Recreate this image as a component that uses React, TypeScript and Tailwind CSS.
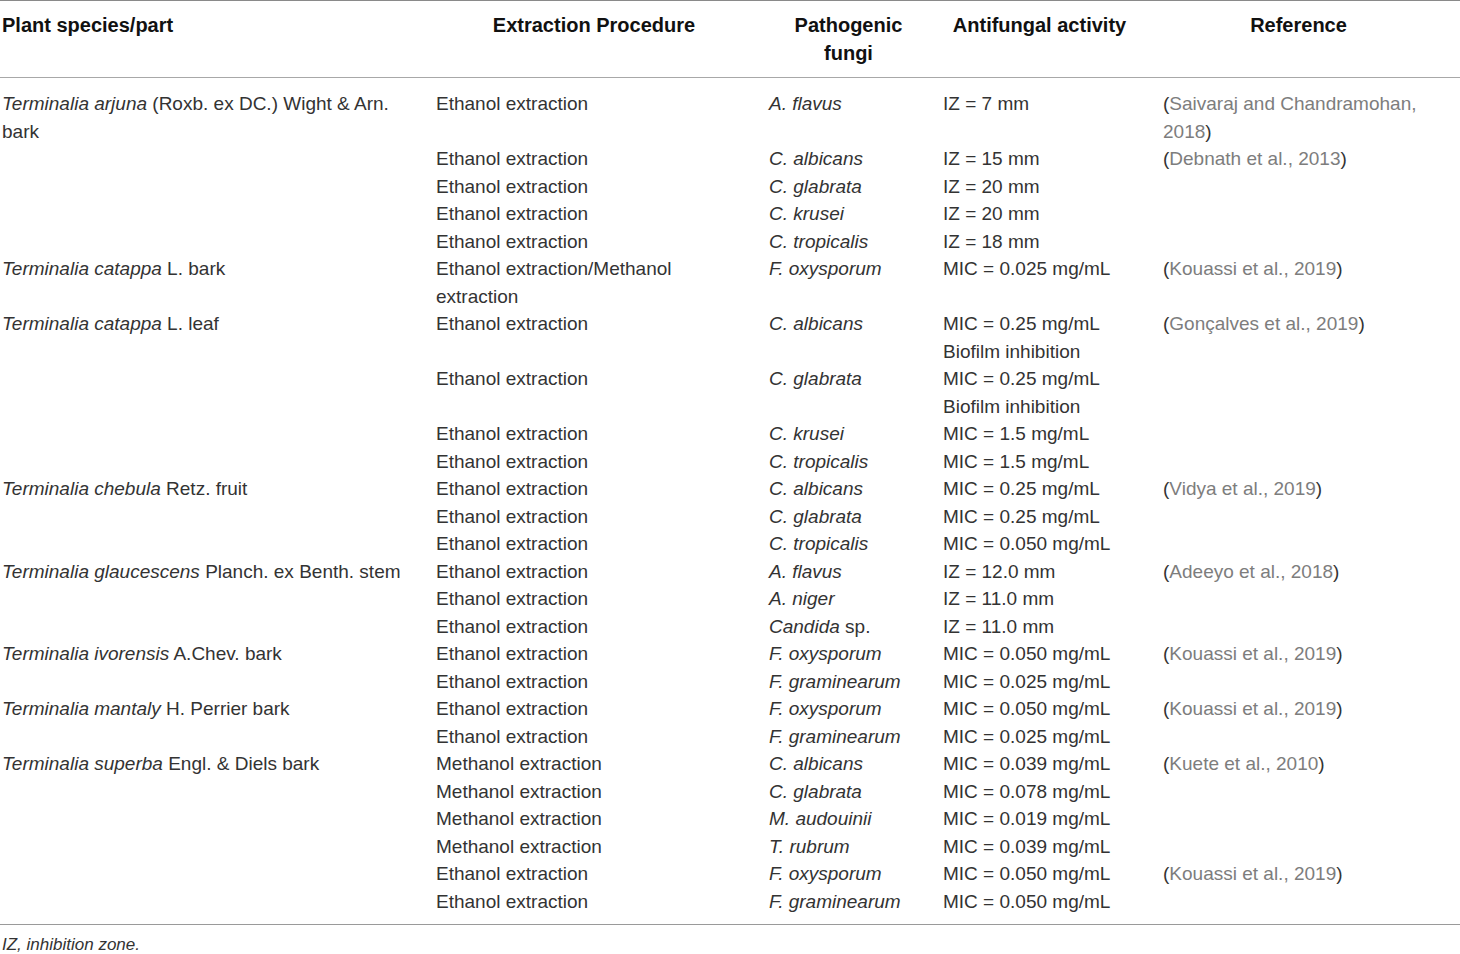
import React from "react";

const G = ({ children }: { children: React.ReactNode }) => (
  <span className="text-[#7d7d7d]">{children}</span>
);

const Ref = ({ children }: { children: React.ReactNode }) => (
  <span>
    (<G>{children}</G>)
  </span>
);

type Row = [React.ReactNode, React.ReactNode, React.ReactNode, React.ReactNode, React.ReactNode];

const E = "Ethanol extraction";
const M = "Methanol extraction";

const rows: Row[] = [
  [
    <>
      <i>Terminalia arjuna</i> (Roxb. ex DC.) Wight &amp; Arn.
      <br />
      bark
    </>,
    E,
    <i>A. flavus</i>,
    "IZ = 7 mm",
    <Ref>
      Saivaraj and Chandramohan,
      <br />
      2018
    </Ref>,
  ],
  ["", E, <i>C. albicans</i>, "IZ = 15 mm", <Ref>Debnath et al., 2013</Ref>],
  ["", E, <i>C. glabrata</i>, "IZ = 20 mm", ""],
  ["", E, <i>C. krusei</i>, "IZ = 20 mm", ""],
  ["", E, <i>C. tropicalis</i>, "IZ = 18 mm", ""],
  [
    <>
      <i>Terminalia catappa</i> L. bark
    </>,
    <>
      Ethanol extraction/Methanol
      <br />
      extraction
    </>,
    <i>F. oxysporum</i>,
    "MIC = 0.025 mg/mL",
    <Ref>Kouassi et al., 2019</Ref>,
  ],
  [
    <>
      <i>Terminalia catappa</i> L. leaf
    </>,
    E,
    <i>C. albicans</i>,
    <>
      MIC = 0.25 mg/mL
      <br />
      Biofilm inhibition
    </>,
    <Ref>Gonçalves et al., 2019</Ref>,
  ],
  [
    "",
    E,
    <i>C. glabrata</i>,
    <>
      MIC = 0.25 mg/mL
      <br />
      Biofilm inhibition
    </>,
    "",
  ],
  ["", E, <i>C. krusei</i>, "MIC = 1.5 mg/mL", ""],
  ["", E, <i>C. tropicalis</i>, "MIC = 1.5 mg/mL", ""],
  [
    <>
      <i>Terminalia chebula</i> Retz. fruit
    </>,
    E,
    <i>C. albicans</i>,
    "MIC = 0.25 mg/mL",
    <Ref>Vidya et al., 2019</Ref>,
  ],
  ["", E, <i>C. glabrata</i>, "MIC = 0.25 mg/mL", ""],
  ["", E, <i>C. tropicalis</i>, "MIC = 0.050 mg/mL", ""],
  [
    <>
      <i>Terminalia glaucescens</i> Planch. ex Benth. stem
    </>,
    E,
    <i>A. flavus</i>,
    "IZ = 12.0 mm",
    <Ref>Adeeyo et al., 2018</Ref>,
  ],
  ["", E, <i>A. niger</i>, "IZ = 11.0 mm", ""],
  [
    "",
    E,
    <>
      <i>Candida</i> sp.
    </>,
    "IZ = 11.0 mm",
    "",
  ],
  [
    <>
      <i>Terminalia ivorensis</i> A.Chev. bark
    </>,
    E,
    <i>F. oxysporum</i>,
    "MIC = 0.050 mg/mL",
    <Ref>Kouassi et al., 2019</Ref>,
  ],
  ["", E, <i>F. graminearum</i>, "MIC = 0.025 mg/mL", ""],
  [
    <>
      <i>Terminalia mantaly</i> H. Perrier bark
    </>,
    E,
    <i>F. oxysporum</i>,
    "MIC = 0.050 mg/mL",
    <Ref>Kouassi et al., 2019</Ref>,
  ],
  ["", E, <i>F. graminearum</i>, "MIC = 0.025 mg/mL", ""],
  [
    <>
      <i>Terminalia superba</i> Engl. &amp; Diels bark
    </>,
    M,
    <i>C. albicans</i>,
    "MIC = 0.039 mg/mL",
    <Ref>Kuete et al., 2010</Ref>,
  ],
  ["", M, <i>C. glabrata</i>, "MIC = 0.078 mg/mL", ""],
  ["", M, <i>M. audouinii</i>, "MIC = 0.019 mg/mL", ""],
  ["", M, <i>T. rubrum</i>, "MIC = 0.039 mg/mL", ""],
  ["", E, <i>F. oxysporum</i>, "MIC = 0.050 mg/mL", <Ref>Kouassi et al., 2019</Ref>],
  ["", E, <i>F. graminearum</i>, "MIC = 0.050 mg/mL", ""],
];

const gridCols = "grid grid-cols-[434px_333px_174px_220px_299px]";

export default function App() {
  return (
    <div className="w-[1460px] h-[954px] bg-white font-['Liberation_Sans',Arial,sans-serif] text-[19px] leading-[27.5px] text-[#333]">
      <div className="border-t border-[#8a8a8a]">
        <div className={`${gridCols} pt-[11px] pb-[10px] border-b border-[#a8a8a8] font-bold text-[20px] leading-[27.5px] text-[#111]`}>
          <div className="pl-[2px]">Plant species/part</div>
          <div className="pl-[2px] pr-[15px] text-center">Extraction Procedure</div>
          <div className="pl-[2px] pr-[13px] text-center">
            Pathogenic
            <br />
            fungi
          </div>
          <div className="pl-[2px] pr-[25px] text-center">Antifungal activity</div>
          <div className="pl-[2px] pr-[26px] text-center">Reference</div>
        </div>
        <div className="pt-[12px] pb-[9px] border-b border-[#9a9a9a]">
          {rows.map((r, i) => (
            <div key={i} className={gridCols}>
              {r.map((c, j) => (
                <div key={j} className="whitespace-nowrap pl-[2px]">
                  {c}
                </div>
              ))}
            </div>
          ))}
        </div>
        <div className="mt-[10px] pl-[2px] text-[17px] leading-[20px] italic text-[#333]">
          IZ, inhibition zone.
        </div>
      </div>
    </div>
  );
}
